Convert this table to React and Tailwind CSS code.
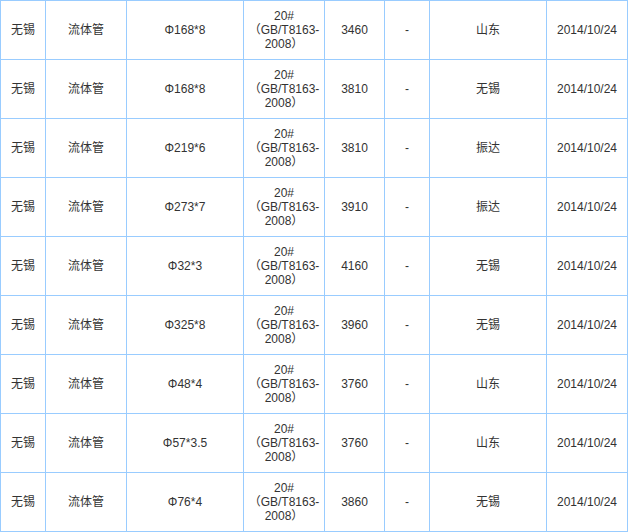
const rows = [
  { spec: "Φ168*8", price: "3460", origin: "山东" },
  { spec: "Φ168*8", price: "3810", origin: "无锡" },
  { spec: "Φ219*6", price: "3810", origin: "振达" },
  { spec: "Φ273*7", price: "3910", origin: "振达" },
  { spec: "Φ32*3", price: "4160", origin: "无锡" },
  { spec: "Φ325*8", price: "3960", origin: "无锡" },
  { spec: "Φ48*4", price: "3760", origin: "山东" },
  { spec: "Φ57*3.5", price: "3760", origin: "山东" },
  { spec: "Φ76*4", price: "3860", origin: "无锡" },
];

function Cell({ w, children }) {
  return (
    <div
      className={`${w} h-full flex items-center justify-center text-center border-r border-[#99ccff] shrink-0`}
    >
      {children}
    </div>
  );
}

export default function App() {
  return (
    <div
      className="w-[628px] h-[532px] bg-white text-[12px] text-[#333] overflow-hidden"
      style={{ fontFamily: '"Liberation Sans", "Noto Sans CJK SC", sans-serif' }}
    >
      <div className="border-l border-t border-[#99ccff] flex flex-col">
        {rows.map((r, i) => (
          <div key={i} className="flex h-[59px] border-b border-[#99ccff]">
            <Cell w="w-[45px]">无锡</Cell>
            <Cell w="w-[81px]">流体管</Cell>
            <Cell w="w-[117px]">{r.spec}</Cell>
            <Cell w="w-[81px]">
              <div className="leading-[14px] flex flex-col items-center">
                <span>20#</span>
                <span>（GB/T8163-</span>
                <span>2008）</span>
              </div>
            </Cell>
            <Cell w="w-[60px]">{r.price}</Cell>
            <Cell w="w-[45px]">-</Cell>
            <Cell w="w-[117px]">{r.origin}</Cell>
            <Cell w="w-[81px]">2014/10/24</Cell>
          </div>
        ))}
      </div>
    </div>
  );
}
